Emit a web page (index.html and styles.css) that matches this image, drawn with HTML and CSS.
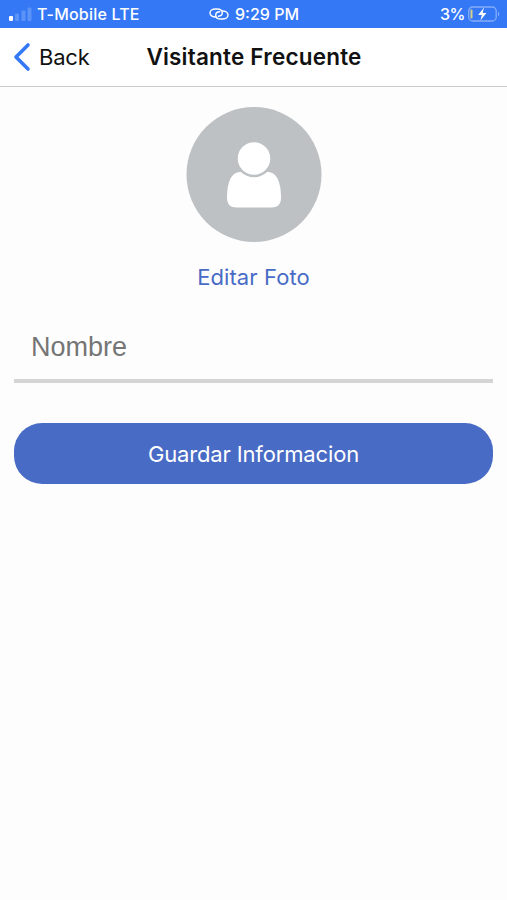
FILE: index.html
```html
<!DOCTYPE html>
<html lang="es">
<head>
    <meta charset="UTF-8">
    <meta name="viewport" content="width=device-width, initial-scale=1.0">
    <title>Visitante Frecuente</title>
    <link rel="stylesheet" href="styles.css">
</head>
<body>
    <div class="status-bar">
        <div class="carrier">
            <svg width="24" height="16" viewBox="0 0 24 16" fill="#fff">
                <rect x="1" y="10" width="4" height="5" rx="1"/>
                <rect x="7" y="7.5" width="4" height="7.5" rx="1" opacity="0.2"/>
                <rect x="13.5" y="4.5" width="4" height="10.5" rx="1" opacity="0.2"/>
                <rect x="19.5" y="1.5" width="4" height="13.5" rx="1" opacity="0.2"/>
            </svg>
            <span>T-Mobile LTE</span>
        </div>
        <div class="time">
            <svg width="20" height="14" viewBox="0 0 20 14" fill="none" stroke="#fff" stroke-width="1.4" stroke-linecap="round">
                <path d="M6.5 10C3.500 10 1 8.300 1 5.900S3.500 2 6.500 2h1.500c3 0 5.300 1.500 5.300 3.800 0 2-1.800 3.400-4 3.400"/>
                <path d="M13.500 4C16.500 4 19 5.700 19 8.100S16.500 12 13.500 12H12c-3 0-5.300-1.500-5.300-3.800 0-2 1.800-3.400 4-3.400"/>
            </svg>
            <span>9:29 PM</span>
        </div>
        <div class="battery">
            <span>3%</span>
            <svg width="32" height="16" viewBox="0 0 32 16">
                <rect x="0.7" y="1" width="27.5" height="14" rx="4" fill="none" stroke="#fff" stroke-width="1.3" opacity="0.4"/>
                <path d="M30 5.5c1.6 1 1.6 4 0 5z" fill="#fff" opacity="0.4"/>
                <rect x="2.5" y="3.5" width="2" height="9" rx="0.8" fill="#d5cf8e"/>
                <path d="M16 1.5L10.2 8.9h3.6L12.400 14.500 18.400 7h-3.700z" fill="#fff"/>
            </svg>
        </div>
    </div>

    <div class="navbar">
        <a href="#" class="back">
            <svg width="18" height="30" viewBox="0 0 18 30" fill="none" stroke="#3478f6" stroke-width="3.6" stroke-linecap="round" stroke-linejoin="round">
                <path d="M15 3L3 15l12 12"/>
            </svg>
            <span>Back</span>
        </a>
        <h1>Visitante Frecuente</h1>
    </div>

    <div class="container">
        <svg class="foto" width="136" height="136" viewBox="0 0 136 136">
            <circle cx="68" cy="67.5" r="67.5" fill="#bdc1c4"/>
            <path d="M54 65h28c8 0 13 9 13 25.500 0 7-3.500 10-9.500 10h-35c-6 0-9.500-3-9.500-10C41 74 46 65 54 65z" fill="#fff"/>
            <circle cx="68" cy="51.5" r="17.5" fill="#fff" stroke="#bdc1c4" stroke-width="2.5"/>
        </svg>
        <a href="#" class="editar">Editar Foto</a>
        <form>
            <input type="text" id="nombre" name="nombre" placeholder="Nombre">
            <button type="button" class="btn">Guardar Informacion</button>
        </form>
    </div>
</body>
</html>
```

FILE: styles.css
```css
* {
    box-sizing: border-box;
}

body {
    font-family: Inter, sans-serif;
    margin: 0;
    background-color: #fdfdfd;
    color: #111;
}

.status-bar {
    display: grid;
    grid-template-columns: 1fr auto 1fr;
    align-items: center;
    height: 28px;
    padding: 0 7px 0 8px;
    background-color: #3478f6;
    color: #fff;
    font-size: 16px;
    font-weight: 500;
}

.carrier,
.time,
.battery {
    display: flex;
    align-items: center;
}

.carrier {
    gap: 5px;
    letter-spacing: 0.2px;
}

.time {
    gap: 6px;
}

.battery {
    justify-content: flex-end;
    gap: 3px;
    letter-spacing: -0.5px;
}

.navbar {
    display: grid;
    grid-template-columns: 1fr auto 1fr;
    align-items: center;
    height: 59px;
    padding: 0 12px 0 13px;
    background-color: #fff;
    border-bottom: 1px solid #ccc;
}

.navbar h1 {
    margin: 0 0 1px;
    font-size: 22.5px;
    font-weight: 600;
    letter-spacing: 0.2px;
}

.back {
    display: flex;
    align-items: center;
    gap: 8px;
    color: #111;
    font-size: 22px;
    letter-spacing: -0.2px;
    text-decoration: none;
}

.container {
    display: flex;
    flex-direction: column;
    align-items: center;
    padding: 20px 14px;
}

.editar {
    margin-top: 20px;
    color: #486bc5;
    font-size: 22px;
    line-height: 28px;
    letter-spacing: 0.1px;
    text-decoration: none;
}

form {
    width: 100%;
    margin-top: 20px;
}

input[type="text"] {
    display: block;
    width: 100%;
    height: 72px;
    padding: 4px 17px 0;
    border: none;
    border-bottom: 4px solid #d5d5d5;
    background-color: transparent;
    font-family: "Liberation Sans", Arial, sans-serif;
    font-size: 27px;
    outline: none;
}

input::placeholder {
    color: #757575;
}

.btn {
    display: block;
    width: 100%;
    height: 61px;
    margin-top: 40px;
    border: none;
    border-radius: 28px;
    background-color: #486bc5;
    color: #fff;
    font-family: Inter, sans-serif;
    font-size: 22px;
    letter-spacing: -0.15px;
}
```
